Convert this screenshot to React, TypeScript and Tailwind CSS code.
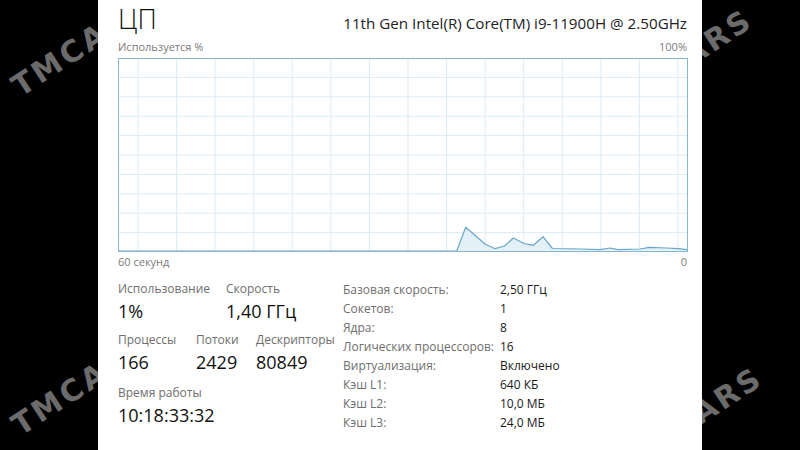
const font = { fontFamily: '"Open Sans", "Noto Sans", sans-serif' };

const vLines = Array.from({ length: 15 }, (_, i) => 20 + i * 38.57);
const hLines = Array.from({ length: 9 }, (_, i) => 19.4 * (i + 1));

const points: [number, number][] = [
  [0, 193],
  [338.7, 193],
  [347.7, 169.3],
  [367, 186],
  [377, 190.7],
  [386.5, 188],
  [395.3, 180],
  [406, 185.5],
  [415.3, 187.3],
  [425, 178.7],
  [434.5, 190.5],
  [462, 191],
  [482, 191.7],
  [492, 190],
  [500.3, 191.7],
  [522, 191],
  [531.3, 189.3],
  [548.7, 190],
  [560.3, 190.7],
  [569, 191.7],
];

function CpuChart() {
  const line = points.map(([x, y]) => `${x},${y}`).join(" ");
  const area = `0,194 ${line} 570,194`;
  return (
    <svg width="570" height="194" viewBox="0 0 570 194" className="block">
      {vLines.map((x) => (
        <line key={x} x1={x} y1={0} x2={x} y2={194} stroke="#dcebf4" strokeWidth={1} />
      ))}
      {hLines.map((y) => (
        <line key={y} x1={0} y1={y} x2={570} y2={y} stroke="#dcebf4" strokeWidth={1} />
      ))}
      <polygon points={area} fill="#e4f0f7" />
      <polyline points={line} fill="none" stroke="#6aa7c7" strokeWidth={1.2} strokeLinejoin="round" />
      <rect x={0.5} y={0.5} width={569} height={193} fill="none" stroke="#86b8d4" strokeWidth={1} />
    </svg>
  );
}

function Watermark({ className }: { className: string }) {
  return (
    <span
      className={`absolute text-[30px] font-bold tracking-[3px] text-[#6b6b6b] origin-left -rotate-[33deg] leading-none ${className}`}
      style={{ fontFamily: '"DejaVu Sans", sans-serif' }}
    >
      TMCARS
    </span>
  );
}

const specs = [
  ["Базовая скорость:", "2,50 ГГц"],
  ["Сокетов:", "1"],
  ["Ядра:", "8"],
  ["Логических процессоров:", "16"],
  ["Виртуализация:", "Включено"],
  ["Кэш L1:", "640 КБ"],
  ["Кэш L2:", "10,0 МБ"],
  ["Кэш L3:", "24,0 МБ"],
];

function Stat({ label, value, className = "" }: { label: string; value: string; className?: string }) {
  return (
    <div className={`flex flex-col ${className}`}>
      <span className="text-[12px] leading-[18px] text-[#6e6e6e]">{label}</span>
      <span className="text-[18px] leading-[26px] text-[#111]">{value}</span>
    </div>
  );
}

export default function App() {
  return (
    <div className="relative w-[800px] h-[450px] bg-black overflow-hidden flex justify-center" style={font}>
      <Watermark className="left-[15px] top-[74px]" />
      <Watermark className="left-[15px] top-[413px]" />
      <Watermark className="left-[617px] top-[88px]" />
      <Watermark className="left-[627px] top-[446px]" />

      <div className="relative z-10 w-[604px] h-full bg-white pl-[20px] pr-[15px]">
        <div className="flex items-end justify-between h-[36px]">
          <span className="text-[27px] font-light leading-[34px] text-[#111]">ЦП</span>
          <span className="text-[15.2px] leading-[24px] text-[#222] mb-[1px]">
            11th Gen Intel(R) Core(TM) i9-11900H @ 2.50GHz
          </span>
        </div>
        <div className="flex justify-between text-[11px] leading-[22px] text-[#7a7a7a]">
          <span>Используется %</span>
          <span>100%</span>
        </div>
        <CpuChart />
        <div className="flex justify-between text-[11px] leading-[20px] text-[#7a7a7a]">
          <span>60 секунд</span>
          <span>0</span>
        </div>

        <div className="flex mt-[8px]">
          <div className="w-[225px] flex flex-col">
            <div className="flex">
              <Stat label="Использование" value="1%" className="w-[108px]" />
              <Stat label="Скорость" value="1,40 ГГц" />
            </div>
            <div className="flex mt-[7px]">
              <Stat label="Процессы" value="166" className="w-[78px]" />
              <Stat label="Потоки" value="2429" className="w-[60px]" />
              <Stat label="Дескрипторы" value="80849" />
            </div>
            <Stat label="Время работы" value="10:18:33:32" className="mt-[9px]" />
          </div>
          <div className="flex flex-col">
            {specs.map(([k, v]) => (
              <div key={k} className="flex h-[19px] items-center text-[12px]">
                <span className="w-[157px] text-[#6e6e6e]">{k}</span>
                <span className="text-[#1a1a1a]">{v}</span>
              </div>
            ))}
          </div>
        </div>
      </div>
    </div>
  );
}
